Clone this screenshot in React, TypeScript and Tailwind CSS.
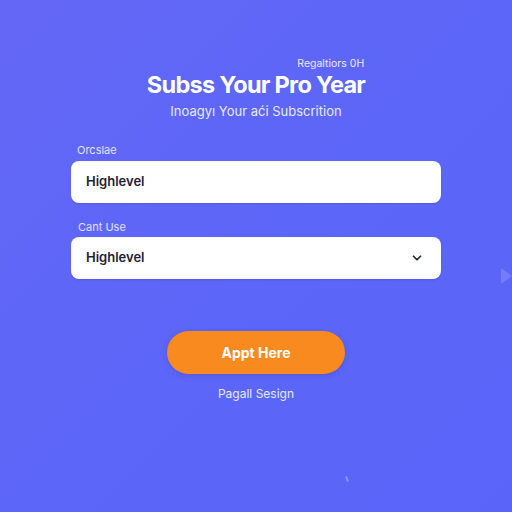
import React from "react";

function Chevron() {
  return (
    <svg width="14" height="14" viewBox="0 0 24 24" fill="none" stroke="#1f2937" strokeWidth="3" strokeLinecap="round" strokeLinejoin="round">
      <path d="M6 9l6 6 6-6" />
    </svg>
  );
}

export default function App() {
  return (
    <div
      className="relative w-[512px] h-[512px] overflow-hidden bg-gradient-to-br from-[#6467f5] via-[#5c66f8] to-[#5a64f8] text-white"
      style={{ fontFamily: "Inter, 'Noto Sans', sans-serif" }}
    >
      <div className="flex flex-col items-center pt-[57px]">
        <div className="inline-flex flex-col">
          <p className="self-end text-[10.5px] leading-[14px] text-white/85 mr-[1px]">Regaltiors 0H</p>
          <h1 className="whitespace-nowrap text-center text-[23.5px] leading-[28px] font-bold tracking-[-0.7px] mt-[0px]">Subss Your Pro Year</h1>
        </div>
        <p className="mt-[4px] whitespace-nowrap text-[13px] leading-[16px] text-white/85">Inoagyı Your aći Subscrition</p>

        <div className="w-[370px] mt-[24px] flex flex-col">
          <label className="ml-[6px] text-[11px] leading-[14px] text-white/80">Orcslae</label>
          <div className="mt-[4px] h-[42px] rounded-[8px] bg-white flex items-center px-[15px] shadow-[0_1px_2px_rgba(30,30,90,0.15)]">
            <span className="text-[13px] font-semibold text-[#1f2230]">Highlevel</span>
          </div>

          <label className="mt-[17px] ml-[7px] text-[11px] leading-[14px] text-white/80">Cant Use</label>
          <div className="mt-[3px] h-[42px] rounded-[8px] bg-white flex items-center justify-between pl-[15px] pr-[17px] shadow-[0_1px_2px_rgba(30,30,90,0.15)]">
            <span className="text-[13px] font-semibold text-[#1f2230]">Highlevel</span>
            <Chevron />
          </div>
        </div>

        <button className="mt-[52px] w-[178px] h-[43px] rounded-full bg-[#f88a1f] text-white text-[14px] font-bold shadow-[0_2px_6px_rgba(60,40,120,0.2)]">
          Appt Here
        </button>
        <p className="mt-[12px] text-[12px] leading-[16px] text-white/85">Pagall Sesign</p>
      </div>

      {/* faint arrow at the right edge and a small stray mark near the bottom */}
      <div className="absolute left-[501px] top-[268px] w-0 h-0 border-y-[8px] border-y-transparent border-l-[11px] border-l-white/15" />
      <div className="absolute left-[346px] top-[476px] w-[2px] h-[6px] rotate-[-20deg] bg-white/30 rounded-full" />
    </div>
  );
}
